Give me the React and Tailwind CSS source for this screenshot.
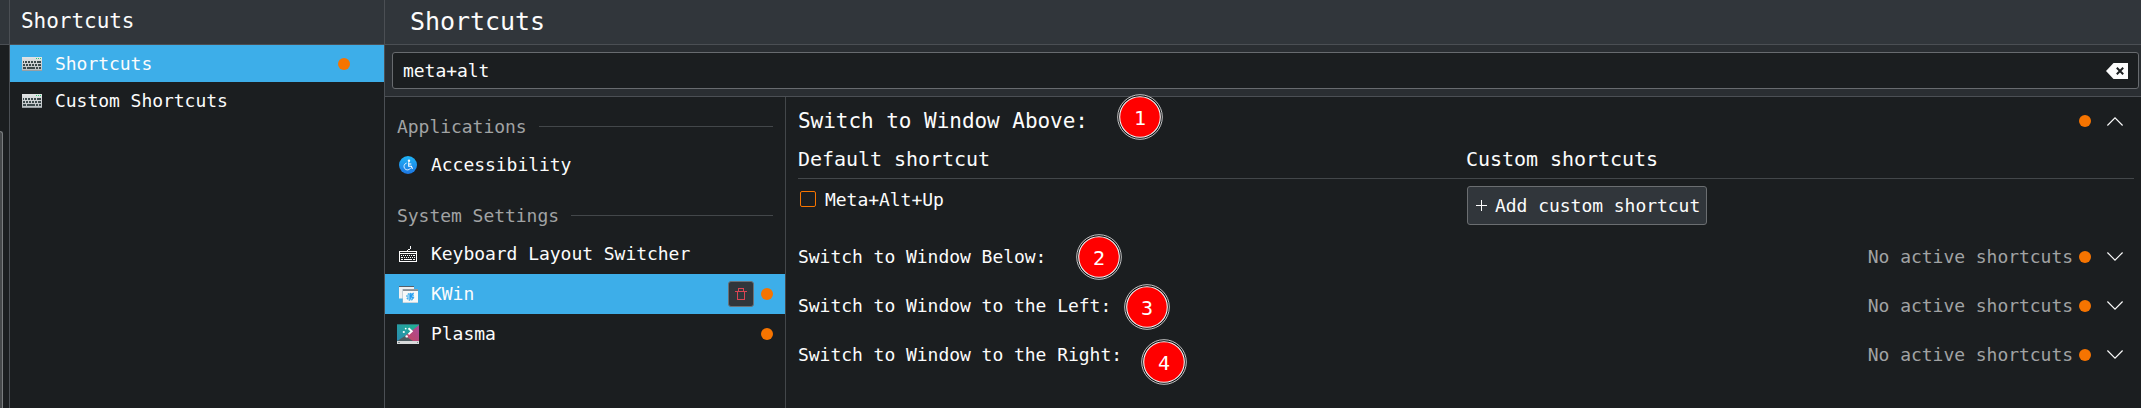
import React from "react";

const Dot = () => <span className="block size-3 shrink-0 rounded-full bg-[#f67400]" />;

const KeyboardPhotoIcon = () => (
  <svg width="20" height="14" viewBox="0 0 20 14" shapeRendering="crispEdges" className="shrink-0">
    <defs>
      <linearGradient id="kb" x1="0" y1="0" x2="0" y2="1">
        <stop offset="0" stopColor="#e2e4e5" />
        <stop offset="1" stopColor="#b9bec1" />
      </linearGradient>
    </defs>
    <rect width="20" height="14" fill="url(#kb)" />
    <rect y="13" width="20" height="1" fill="#99a0a4" />
    <path d="M14 1h1v1h-1zM16 1h1v1h-1zM18 1h1v1h-1z" fill="#2ecc71" />
    <path
      d="M1 4h1v2h-1zM3 4h2v2h-2zM6 4h2v2h-2zM9 4h2v2h-2zM12 4h2v2h-2zM15 4h4v2h-4zM1 7h2v2h-2zM4 7h2v2h-2zM7 7h2v2h-2zM10 7h2v2h-2zM13 7h2v2h-2zM16 7h3v2h-3zM1 10h3v2h-3zM5 10h8v2h-8zM14 10h2v2h-2zM17 10h2v2h-2z"
      fill="#3d4a4c"
    />
  </svg>
);

const AccessibilityIcon = () => (
  <svg width="18" height="18" viewBox="0 0 18 18" className="shrink-0">
    <defs>
      <linearGradient id="acc" x1="0" y1="0" x2="0" y2="1">
        <stop offset="0" stopColor="#1fb5f7" />
        <stop offset="1" stopColor="#1d76e2" />
      </linearGradient>
    </defs>
    <circle cx="9" cy="9" r="9" fill="url(#acc)" />
    <circle cx="10" cy="4.8" r="1.2" fill="#fff" />
    <path d="M9.7 6.3v3.9h2.6l1.2 2.6M9.7 8h2.6" fill="none" stroke="#fff" strokeWidth="1.1" />
    <path d="M7.7 7a3.5 3.5 0 1 0 3.9 5" fill="none" stroke="#d6ecff" strokeWidth="1" />
  </svg>
);

const KeyboardLayoutIcon = () => (
  <svg width="18" height="16" viewBox="0 0 18 16" shapeRendering="crispEdges" className="shrink-0">
    <path d="M11 0h1v3h-1zM9 3h2v1h-2zM8 4h1v1h-1z" fill="#fcfcfc" />
    <path d="M0 5h18v11H0zM1 6v1h16v-1zM1 8v7h16v-7z" fill="#fcfcfc" fillRule="evenodd" />
    <path
      d="M2 9h1v1h-1zM4 9h1v1h-1zM6 9h1v1h-1zM8 9h1v1h-1zM10 9h1v1h-1zM12 9h1v1h-1zM14 9h2v1h-2zM2 11h2v1h-2zM5 11h1v1h-1zM7 11h1v1h-1zM9 11h1v1h-1zM11 11h1v1h-1zM13 11h1v1h-1zM15 11h1v1h-1zM2 13h2v1h-2zM5 13h8v1h-8zM14 13h2v1h-2z"
      fill="#fcfcfc"
    />
  </svg>
);

const KWinIcon = () => (
  <svg width="19" height="17" viewBox="0 0 19 17" className="shrink-0">
    <rect x="0" y="0" width="15" height="12.5" fill="#eff0f1" />
    <rect x="0" y="0" width="15" height="1" fill="#566069" />
    <rect x="3.5" y="3" width="15.5" height="14" fill="#9cb4c4" />
    <rect x="4" y="3.5" width="15" height="13" fill="#f7f8f8" />
    <rect x="4" y="3.5" width="15" height="1.2" fill="#566069" />
    <circle cx="11.2" cy="10.8" r="3.2" fill="#8fd0f5" />
    <circle cx="11.2" cy="10.8" r="3.4" fill="none" stroke="#3daee9" strokeWidth="1.3" strokeDasharray="1.5 1.1" />
    <path d="M11.2 7.2v6M14.6 6.8l-2.9 3.2 2.6 2.6" fill="none" stroke="#1d99f3" strokeWidth="1.2" />
  </svg>
);

const PlasmaIcon = () => (
  <svg width="22" height="20" viewBox="0 0 22 20" className="shrink-0">
    <defs>
      <linearGradient id="pl" x1="1" y1="0" x2="0" y2="1">
        <stop offset="0" stopColor="#1fb58e" />
        <stop offset="1" stopColor="#2b86b5" />
      </linearGradient>
      <linearGradient id="pk" x1="0" y1="1" x2="1" y2="0">
        <stop offset="0" stopColor="#c5455c" />
        <stop offset="1" stopColor="#a94a9c" />
      </linearGradient>
    </defs>
    <rect width="22" height="20" fill="url(#pl)" />
    <path d="M22 1v16h-7L8 12z" fill="url(#pk)" />
    <path d="M0 17l8-5 8 5z" fill="#4d5b60" />
    <rect width="22" height="1" fill="#2a7079" />
    <rect y="17" width="22" height="3" fill="#d8dadb" />
    <path d="M1 18h2v1h-2zM20 18h1v1h-1z" fill="#7f8c8d" />
    <path d="M11.5 4.2l3.3 3.1-3.3 3.1" fill="none" stroke="#fff" strokeWidth="1.9" />
    <circle cx="8.7" cy="4.6" r=".9" fill="#fff" />
    <circle cx="6.8" cy="8" r="1.1" fill="#fff" />
    <circle cx="9.7" cy="12.4" r="1.2" fill="#fff" />
  </svg>
);

const TrashIcon = () => (
  <svg width="12" height="12" viewBox="0 0 12 12" shapeRendering="crispEdges">
    <path d="M3 0h6v3h-1V1H4v2H3zM0 3h12v1H0zM2 4h1v7h6V4h1v8H2z" fill="#da4453" />
  </svg>
);

const Chevron = ({ up }) => (
  <svg width="16" height="9" viewBox="0 0 16 9" className="shrink-0">
    <path d={up ? "M.4 8.5L8 .9l7.6 7.6" : "M.4.5L8 8.1 15.6.5"} fill="none" stroke="#fcfcfc" strokeWidth="1.15" />
  </svg>
);

const ClearIcon = () => (
  <svg width="22" height="16" viewBox="0 0 22 16" className="shrink-0">
    <path d="M7.5 0H22v16H7.5L0 8z" fill="#fcfcfc" />
    <path d="M10.8 4.8l6.4 6.4M17.2 4.8l-6.4 6.4" stroke="#1b1e20" strokeWidth="2" />
  </svg>
);

const SidebarItem = ({ label, active, modified }) => (
  <div className={`flex h-[37px] items-center pl-3 pr-[34px] ${active ? "bg-[#3daee9]" : ""}`}>
    <KeyboardPhotoIcon />
    <span className="ml-[13px] flex-1">{label}</span>
    {modified && <Dot />}
  </div>
);

const SectionTitle = ({ children, className }) => (
  <div className={`flex items-center gap-3 pl-3 pr-3 text-[#a1a3a4] ${className}`}>
    <span>{children}</span>
    <span className="h-px flex-1 bg-[#43474a]" />
  </div>
);

const ComponentItem = ({ icon, label, active, modified }) => (
  <div className={`flex h-10 items-center pl-3 pr-3 ${active ? "bg-[#3daee9]" : ""}`}>
    <span className="flex w-[22px] justify-center">{icon}</span>
    <span className="ml-3 flex-1">{label}</span>
    {active && (
      <span className="mr-[7px] flex size-[26px] items-center justify-center rounded-[3px] border border-[#6b7075] bg-[#31363b]">
        <TrashIcon />
      </span>
    )}
    {modified && <Dot />}
  </div>
);

const ActionRow = ({ label }) => (
  <div className="flex h-[49px] items-center pr-[18px]">
    <span className="flex-1">{label}</span>
    <span className="mr-[6px] text-[#a1a3a4]">No active shortcuts</span>
    <Dot />
    <span className="ml-4">
      <Chevron />
    </span>
  </div>
);

const Badge = ({ n, className }) => (
  <div className={`absolute size-[46px] ${className}`}>
    <svg width="46" height="46" viewBox="0 0 46 46">
      <circle cx="23" cy="23" r="22.3" fill="#101214" stroke="#dcdcdc" strokeWidth=".9" />
      <circle cx="23" cy="23" r="20.3" fill="#ff0000" stroke="#f4f4f4" strokeWidth="1.1" />
      <text x="23" y="31" textAnchor="middle" fontSize="20" fill="#fff">
        {n}
      </text>
    </svg>
  </div>
);

export default function App() {
  return (
    <div className="relative flex h-[408px] w-[2141px] overflow-hidden bg-[#1b1e20] font-['DejaVu_Sans_Mono','Liberation_Mono',monospace] text-[18px] leading-6 tracking-[-0.037px] whitespace-pre text-[#fcfcfc]">
      <div className="flex w-[10px] shrink-0 flex-col border-r border-[#4b4f54]">
        <div className="h-[45px] border-b border-[#4b4f54] bg-[#31363b]" />
        <div className="mt-[86px] w-[3px] flex-1 rounded-tr-[3px] border-t border-r border-[#7a7d7f] bg-[#45484a]" />
      </div>

      <nav className="flex w-[375px] shrink-0 flex-col border-r border-[#4b4f54]">
        <div className="flex h-[45px] items-center border-b border-[#4b4f54] bg-[#31363b] pb-[3px] pl-[11px] text-[21px]">
          Shortcuts
        </div>
        <SidebarItem label="Shortcuts" active modified />
        <SidebarItem label="Custom Shortcuts" />
      </nav>

      <main className="flex flex-1 flex-col">
        <header className="flex h-[45px] items-center border-b border-[#4b4f54] bg-[#31363b] pb-px pl-[25px] text-[25px]">
          Shortcuts
        </header>
        <div className="h-[52px] border-b border-[#4b4f54] bg-[#2a2e32] pt-[7px] pr-[2px] pl-[7px]">
          <div className="flex h-[37px] items-center justify-between rounded-[3px] border border-[#686b6f] bg-[#1b1e20] pr-[10px] pl-[10px]">
            <span>meta+alt</span>
            <ClearIcon />
          </div>
        </div>

        <div className="flex flex-1">
          <div className="flex w-[401px] shrink-0 flex-col border-r border-[#43474a]">
            <SectionTitle className="mt-4 h-[27px]">Applications</SectionTitle>
            <div className="mt-[5px]">
              <ComponentItem icon={<AccessibilityIcon />} label="Accessibility" />
            </div>
            <SectionTitle className="mt-[17px] h-[27px]">System Settings</SectionTitle>
            <div className="mt-[5px]">
              <ComponentItem icon={<KeyboardLayoutIcon />} label="Keyboard Layout Switcher" />
              <ComponentItem icon={<KWinIcon />} label="KWin" active modified />
              <ComponentItem icon={<PlasmaIcon />} label="Plasma" modified />
            </div>
          </div>

          <div className="flex flex-1 flex-col pl-3">
            <div className="flex h-[49px] items-center pr-[18px] pb-px text-[21px]">
              <span className="flex-1">Switch to Window Above:</span>
              <Dot />
              <span className="ml-4">
                <Chevron up />
              </span>
            </div>
            <div className="mr-[7px] flex h-[33px] items-start border-b border-[#43474a] pt-px text-[20px]">
              <span className="w-[668px]">Default shortcut</span>
              <span>Custom shortcuts</span>
            </div>
            <div className="flex h-[53px] items-start pt-[7px]">
              <div className="flex w-[669px] items-center pt-[2px] pl-[2px]">
                <span className="-mt-[2px] mr-[9px] size-4 rounded-[2px] border border-[#f67400]" />
                <span>Meta+Alt+Up</span>
              </div>
              <button className="flex h-[39px] w-[240px] items-center rounded-[3px] border border-[#6b6e71] bg-[#31363b] pl-2">
                <svg width="11" height="11" viewBox="0 0 11 11" shapeRendering="crispEdges" className="mr-2">
                  <path d="M5 0h1v11h-1zM0 5h11v1H0z" fill="#fcfcfc" />
                </svg>
                Add custom shortcut
              </button>
            </div>
            <ActionRow label="Switch to Window Below:" />
            <ActionRow label="Switch to Window to the Left:" />
            <ActionRow label="Switch to Window to the Right:" />
          </div>
        </div>
      </main>

      <Badge n="1" className="top-[94px] left-[1117px]" />
      <Badge n="2" className="top-[234px] left-[1076px]" />
      <Badge n="3" className="top-[284px] left-[1124px]" />
      <Badge n="4" className="top-[339px] left-[1141px]" />
    </div>
  );
}
